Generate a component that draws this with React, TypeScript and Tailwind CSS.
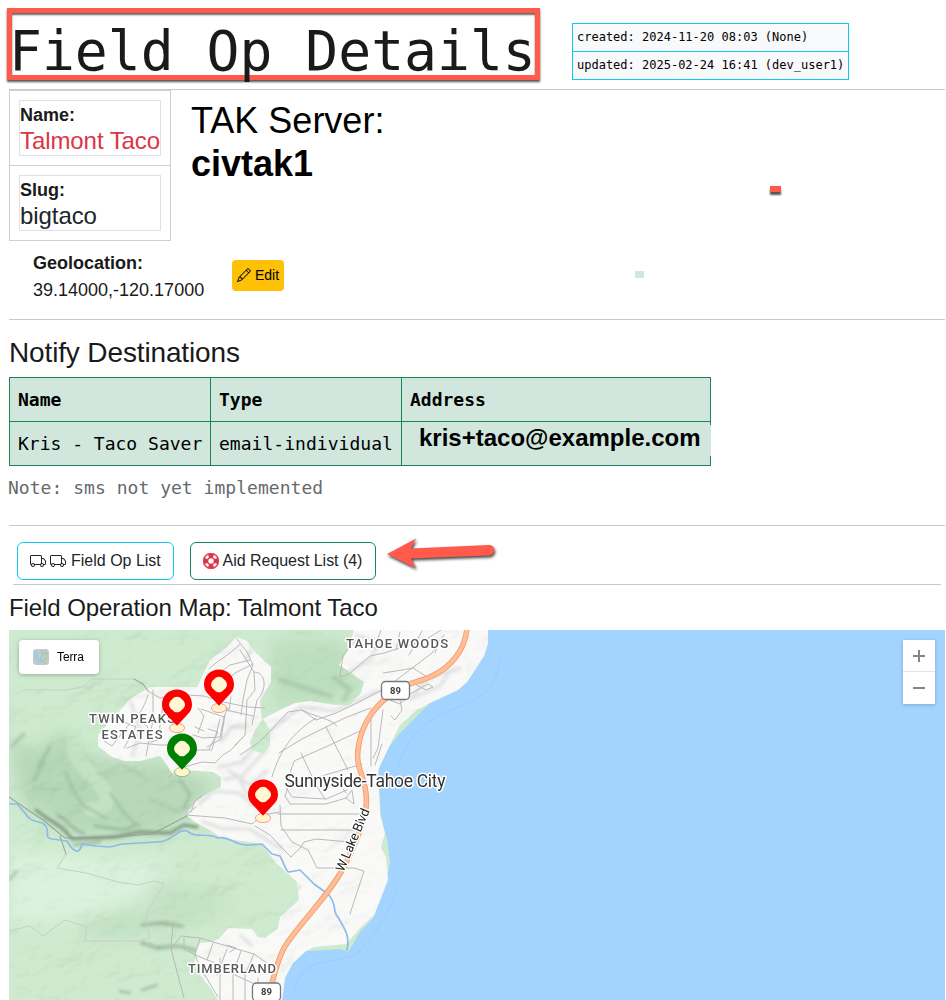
import React from "react";
import { BsLifePreserver, BsPencil, BsTruck } from "react-icons/bs";

const mono = "font-['DejaVu_Sans_Mono',monospace]";

function Header() {
  return (
    <header className="flex h-[89px] items-start pl-[7px] pt-2">
      <h1
        className={`${mono} flex h-[72px] w-[533px] items-center whitespace-pre border-[5px] border-[#ff5a4c] text-[54.7px] leading-[62px] text-[#1a1a1a] shadow-[0_2px_2px_#555,inset_0_2px_2px_#666] pt-[13px]`}
      >
        <span className="-ml-[3px]">Field Op Details</span>
      </h1>
      <div className={`${mono} ml-8 mt-[15px] w-[277px] border border-[#0dcaf0] bg-[#f8f9fa] text-xs text-black`}>
        <div className="h-7 border-b border-[#0dcaf0] pl-1 leading-[26px]">created: 2024-11-20 08:03 (None)</div>
        <div className="h-[27px] pl-1 leading-[26px]">updated: 2025-02-24 16:41 (dev_user1)</div>
      </div>
    </header>
  );
}

function NameCell({ label, value, tone }: { label: string; value: string; tone: string }) {
  return (
    <div className="h-[75px] border-b border-[#cfcfcf] p-[9px]">
      <div className="h-[56px] border border-[#dee2e6]">
        <div className="mt-[1px] text-lg font-bold leading-[27px]">{label}</div>
        <div className={`-mt-[1px] whitespace-nowrap text-2xl leading-[26px] tracking-[-0.08px] ${tone}`}>{value}</div>
      </div>
    </div>
  );
}

function Overview() {
  return (
    <section className="relative ml-[9px] mr-px h-[230px] border-t border-[#c8c8c8]">
      <div className="flex">
        <div className="w-[162px] border border-b-0 border-[#cfcfcf]">
          <NameCell label="Name:" value="Talmont Taco" tone="text-[#dc3545]" />
          <NameCell label="Slug:" value="bigtaco" tone="text-[#212529]" />
        </div>
        <div className="ml-5 mt-[9px] text-4xl leading-[43px] text-black">
          TAK Server:
          <div className="font-bold">civtak1</div>
        </div>
      </div>
      <div className="ml-6 mt-[9px] flex">
        <div className="w-[199px] text-lg leading-[27px]">
          <div className="font-bold">Geolocation:</div>
          <div>39.14000,-120.17000</div>
        </div>
        <button className="mt-[10px] flex h-[31px] w-[52px] items-center gap-1 rounded bg-[#ffc107] pb-px pl-[5px] text-sm text-black">
          <BsPencil size={14} />
          Edit
        </button>
      </div>
      <div className="absolute left-[761px] top-[96px] h-1.5 w-[11px] bg-[#ff5a4c] shadow-[0_3px_2px_#555]" />
      <div className="absolute left-[626px] top-[181px] h-[7px] w-[9px] bg-[#d1e7dd]" />
    </section>
  );
}

function Destinations() {
  return (
    <section className="ml-[9px] mr-px h-[206px] border-t border-[#c8c8c8] pt-[16px]">
      <h2 className="text-[28px] leading-[34px] tracking-[-0.14px]">Notify Destinations</h2>
      <table className={`${mono} mt-[7px] w-[702px] table-fixed border-collapse bg-[#d1e7dd] text-left text-lg text-black`}>
        <colgroup>
          <col className="w-[201px]" />
          <col className="w-[191px]" />
          <col />
        </colgroup>
        <thead>
          <tr className="h-11">
            <th className="border border-[#198754] p-0 pl-2">Name</th>
            <th className="border border-[#198754] p-0 pl-2">Type</th>
            <th className="border border-[#198754] p-0 pl-2">Address</th>
          </tr>
        </thead>
        <tbody>
          <tr className="h-11">
            <td className="whitespace-nowrap border border-[#198754] p-0 pl-2">Kris - Taco Saver</td>
            <td className="whitespace-nowrap border border-[#198754] p-0 pl-2 tracking-[0.03px]">email-individual</td>
            <td className="relative border border-[#198754] p-0">
              <div className="absolute left-[17px] right-[-1px] top-[3px] h-[31px] bg-[#d1e7dd] font-['Liberation_Sans',sans-serif] text-2xl font-bold leading-[26px]">
                kris+taco@example.com
              </div>
            </td>
          </tr>
        </tbody>
      </table>
      <p className={`${mono} -ml-px mt-[8px] text-lg leading-[27px] tracking-[0.03px] text-[#666a6c]`}>
        Note: sms not yet implemented
      </p>
    </section>
  );
}

function Actions() {
  return (
    <nav className="relative ml-[9px] mr-px h-[59px] border-t border-[#c8c8c8] pt-4">
      <div className="ml-2 flex gap-4 text-base text-[#212529]">
        <button className="flex h-[38px] w-[157px] items-center rounded-md border border-[#0dcaf0] pl-[11.5px]">
          <BsTruck size={16} className="-mt-px" />
          <BsTruck size={16} className="-mt-px ml-[4.5px] mr-[5px]" />
          <span className="whitespace-nowrap">Field Op List</span>
        </button>
        <button className="flex h-[38px] w-[186px] items-center rounded-md border border-[#198754] pl-3">
          <BsLifePreserver size={16} color="#dc3545" stroke="#dc3545" strokeWidth={0.5} className="-mt-px mr-[3.5px]" />
          <span className="whitespace-nowrap tracking-[-0.03px]">Aid Request List (4)</span>
        </button>
      </div>
      <svg className="absolute left-[371px] top-[8px] h-[44px] w-[122px]" viewBox="380 534 122 44">
        <path
          d="M387 554L416 538.5L411 548.5L489 545C496 545 496 555 489 555.5L411 558.5L416 568Z"
          fill="#ff5a4c"
          style={{ filter: "drop-shadow(1px 2px 1.5px #444)" }}
        />
      </svg>
    </nav>
  );
}

const land =
  "M9 630H488V643L484 656L467 682L458 690L430 703L415 718L400 733L388 748L380 765L378 775L380 800L381 815L385 833L387 838L390 862L387 880L379 903L374 917L360 932L353 944L348 952L340 949L325 950L306 951L293 963L285 975L282 1000H9Z";
const urban =
  "M354 630L348 650L339 665L350 672L364 682L361 693L350 705L335 705L310 701L295 703L278 711L263 719L270 730V745L263 754L252 750L250 742L255 730L262 720L260 700L271 682V667L255 652L247 641L236 637L226 648L210 660L197 687H150L130 699L98 735V746L112 757L125 761H140L160 756L167 765L173 775L185 770L213 772L221 777V787L205 795L195 802L186 815L195 822L210 830L220 837L235 840L262 844L275 862L297 882L299 900L280 917L278 928L265 938L258 937L252 929L228 928L220 938L210 942L200 943L196 950L194 965L200 975L212 990L218 1000H282L285 978L293 963L306 951L314 947L346 944L362 926L374 915L379 903L388 880L386 857L381 848L385 833L380 815L378 770L390 745L400 725L417 710L430 703L458 690L467 682L484 656L488 643V630Z";

const minorRoads = [
  "M236 638L247 652L253 665L247 680L243 700L241 715",
  "M240 644C230 655 215 662 209 669",
  "M250 660L230 665L214 677M253 664L235 673L220 687",
  "M254 672C268 672 266 692 257 700L252 725",
  "M240 650L254 672L255 690L247 700L245 735L235 745",
  "M148 695C142 715 133 720 126 728L112 746L104 741",
  "M124 722L136 727L124 748M136 718L147 726L153 740",
  "M153 690V720L146 756M164 697L158 740L151 742",
  "M127 748L140 743L160 745L177 745M148 691L160 698L188 695L204 696L223 702L248 707L265 708",
  "M201 709L224 717L220 737L203 738L193 735",
  "M198 708L204 716L198 733M224 717L228 708M220 719L212 750L195 750",
  "M225 715L221 739L207 747M208 729L218 732L209 749M204 731L195 727",
  "M245 735L231 750L223 755L215 763L202 762L181 768L168 777",
  "M226 710L253 716M231 697L229 711",
  "M356 640L343 655L340 677L349 674L370 656L384 653L425 640L441 630",
  "M381 630L374 649M400 632L396 650M422 631L409 655M440 640L435 653",
  "M383 673L402 670L413 668L427 677M444 635L432 653L403 675L386 688",
  "M411 682L426 690L433 687L428 684L410 694L400 704L390 700",
  "M240 755L258 743L272 729L288 712L302 710L316 720L336 713L355 704L382 690",
  "M302 710C318 718 330 718 337 726M316 718C292 733 280 750 272 777",
  "M279 753L302 739L326 727L347 717L371 708M301 753L316 785M326 727L348 770",
  "M294 761L330 745L362 730M312 779L362 764M294 762C286 780 290 784 285 796L290 804L326 804L346 798L354 804L352 790L346 798",
  "M287 789L292 797L326 799L347 790M316 785L325 799M338 782L346 793",
  "M371 710V766M383 710L378 748L373 758M400 700L402 710L395 720L391 716M382 744L375 765",
  "M278 814H362M281 830H354M280 805L281 826L292 842L308 850L317 868H354L364 871L350 914",
  "M255 826L270 835L284 850L291 857L301 847L304 842L316 839L350 842",
  "M186 815L196 807M186 815L225 818L252 824L262 815L280 812M191 812L195 801L202 796",
  "M173 923L171 949L184 998M171 949L181 936L200 938L230 947L254 954L270 965M184 938V949L200 957L215 963L235 975L270 991",
  "M200 939L195 955L201 969L218 997M213 943L207 960M227 949L217 975M241 951L234 971M254 954L245 975",
  "M220 958V1000M233 964V1000M245 970V1000M258 978V1000M227 945L236 948L230 952",
];

const highway =
  "M467 628C465 652 449 668 432 676C416 684 403 682 389 696C370 710 360 730 358 750C355 770 369 781 366 808C365 822 351 853 345 865C330 895 296 927 284 948C276 963 273 980 268 1000";

function Shield({ x, y }: { x: number; y: number }) {
  return (
    <g>
      <rect x={x} y={y} width="28" height="18" rx="4" fill="#fff" stroke="#74777c" strokeWidth="1.3" />
      <text x={x + 14} y={y + 12} textAnchor="middle" fontSize="9.5" fontWeight="700" fill="#3d3d3d">
        89
      </text>
    </g>
  );
}

function Pin({ x, y, color }: { x: number; y: number; color: string }) {
  return (
    <g transform={`translate(${x} ${y})`}>
      <ellipse cx="0" cy="3" rx="7.6" ry="4.6" fill="#fff5cc" stroke={color} strokeOpacity=".6" strokeWidth=".6" />
      <path
        d="M0 .8L-10.5 -10.5C-13.5 -13.5 -15 -16.5 -15 -20.5C-15 -29 -8.5 -35.5 0 -35.5C8.5 -35.5 15 -29 15 -20.5C15 -16.5 13.5 -13.5 10.5 -10.5Z"
        fill={color}
      />
      <path
        d="M-3 -27.5Q0 -29.2 3 -27.5L6.5 -24.3Q9.5 -20.5 6.5 -16.8L3 -13.5Q0 -11.8 -3 -13.5L-6.5 -16.8Q-9.5 -20.5 -6.5 -24.3Z"
        fill="#fff8d2"
      />
    </g>
  );
}

function MapDrawing() {
  return (
    <svg className="block h-[370px] w-[936px] font-[Roboto,sans-serif]" viewBox="9 630 936 370">
      <defs>
        <clipPath id="land">
          <path d={land} />
        </clipPath>
        <clipPath id="urban">
          <path d={urban} />
        </clipPath>
        <filter id="blur-fine" x="-30%" y="-30%" width="160%" height="160%">
          <feGaussianBlur stdDeviation="1.7" />
        </filter>
        <filter id="blur-wide" x="-40%" y="-40%" width="180%" height="180%">
          <feGaussianBlur stdDeviation="8" />
        </filter>
        <filter id="relief" x="0" y="0" width="100%" height="100%">
          <feTurbulence type="fractalNoise" baseFrequency=".018 .026" numOctaves="4" seed="8" result="n" />
          <feDiffuseLighting in="n" surfaceScale="9" diffuseConstant="1.15" lightingColor="#fff">
            <feDistantLight azimuth="225" elevation="60" />
          </feDiffuseLighting>
        </filter>
      </defs>
      <rect x="9" y="630" width="936" height="370" fill="#a3d3ff" />
      <path
        d="M499 660C497 690 480 700 450 710C425 720 405 740 399 765M398 885C389 915 375 935 358 953C335 965 300 956 295 990"
        fill="none"
        stroke="#9accfa"
        strokeWidth="1"
      />
      <path d={land} fill="#c6e7c7" />
      <g clipPath="url(#land)">
        <g filter="url(#blur-wide)">
          <path d="M9 740L40 750L60 730L100 765L160 762L215 785L190 815L160 835L75 835L20 800Z" fill="#abd2ad" />
          <path d="M100 790L130 765L215 780L175 815Z" fill="#aed2af" />
          <path d="M9 850L70 855L170 860L155 890L80 918L9 925Z" fill="#d6f0d7" />
          <path d="M150 880L180 885L240 905L180 930L145 935Z" fill="#bbdebc" />
          <path d="M270 640L345 640L362 695L275 710Z" fill="#b3d9b5" />
          <path d="M80 925L150 905L135 940L90 940Z" fill="#b9ddba" />
        </g>
        <g filter="url(#blur-fine)" fill="none" strokeLinecap="round" strokeLinejoin="round">
          <path d="M75 738C68 760 92 772 104 790C113 804 100 812 90 809" stroke="#bfe1bf" strokeWidth="14" opacity=".75" />
          <path d="M110 793C120 808 130 822 140 826M66 773C70 785 76 796 84 806L106 818" stroke="#87ac8b" strokeWidth="3" opacity=".6" />
          <path d="M36 810C50 822 60 823 72 839L115 837L140 832L170 833L184 825L197 827" stroke="#5f7963" strokeWidth="3.5" opacity=".8" />
          <path d="M58 815C70 822 74 832 84 833M74 845L100 842M95 826L125 830L135 825" stroke="#759a7a" strokeWidth="3" opacity=".6" />
          <path d="M12 746L24 734M34 780L44 762M50 747L38 767M180 780L190 795L184 808" stroke="#7da384" strokeWidth="3.5" opacity=".5" />
          <path d="M100 775L120 764L143 776M150 800L180 812" stroke="#91b895" strokeWidth="4" opacity=".4" />
          <path d="M142 925L160 923L182 926M142 943L158 948L178 946L198 951" stroke="#759379" strokeWidth="4" opacity=".55" />
          <path d="M120 991L130 993M142 990L157 985M9 880L16 872" stroke="#78937b" strokeWidth="2.5" opacity=".6" />
          <path d="M335 678L350 690L344 699M280 680L330 696" stroke="#82a888" strokeWidth="5" opacity=".4" />
        </g>
      </g>
      <path d={urban} fill="#f8f8f7" />
      <g clipPath="url(#urban)">
        <g filter="url(#blur-fine)" fill="none" stroke="#c9cbcb" strokeWidth="3" opacity=".6">
          <path d="M218 768L241 762L265 735L300 707L334 711L380 690M224 780L239 777L246 793L260 796M198 804L214 791L239 793L261 810M202 821L223 829L249 829L282 849M279 690L265 712M410 700L428 678L461 668M413 698L440 686L450 671M220 742L232 727L248 727M238 780L268 748M228 770L250 785L268 770" />
          <path d="M130 700L140 730L132 757M258 636L246 660M300 885L280 910M240 935L252 946M355 635L380 642L370 660L344 675" />
        </g>
      </g>
      <g clipPath="url(#land)">
        <rect x="9" y="630" width="480" height="370" filter="url(#relief)" className="opacity-[0.14] mix-blend-multiply" />
      </g>
      <g clipPath="url(#land)" fill="none" strokeLinecap="round" strokeLinejoin="round">
        <path
          d="M23 690L65 690L83 687L92 679L134 679M66 854L57 868L86 873L118 882L138 885L155 881L164 884L149 908L146 920L150 938L138 941L85 941L87 927L65 920L50 931L43 936L30 926L9 931"
          stroke="#c6cfc6"
          strokeWidth="1"
        />
        <path d="M134 679L143 684L148 691M9 797L28 810L43 820L65 838L115 837L152 834L187 816M60 836L66 854" stroke="#8e9891" strokeWidth="1.1" opacity=".8" />
        <path d={minorRoads.join("")} stroke="#b8b9b9" strokeWidth="1" />
        <path
          d="M9 804L17 804L25 813C32 825 40 819 46 826C50 836 44 837 52 839L67 841C75 855 80 853 82 844L96 846L110 847L122 844L157 842C173 842 177 828 187 831C196 839 209 832 218 838C228 835 235 846 249 845L262 844L272 854L280 856C285 865 286 872 289 872L300 870L314 884L328 894C338 905 332 912 338 917C345 930 350 935 347 950"
          stroke="#8bbbea"
          strokeWidth="1.7"
        />
        <path d={highway} stroke="#f29b68" strokeWidth="5.5" />
        <path d={highway} stroke="#ffbe97" strokeWidth="3.8" />
      </g>
      <Shield x={381.5} y={681.5} />
      <Shield x={252.5} y={983} />
      <g fill="#57595b" stroke="#fff" strokeWidth="3" strokeLinejoin="round" paintOrder="stroke" fontSize="13" fontWeight="500" textAnchor="middle">
        <text x="397" y="648" textLength="102">TAHOE WOODS</text>
        <text x="132" y="723" textLength="86">TWIN PEAKS</text>
        <text x="132" y="739" textLength="61">ESTATES</text>
        <text x="232" y="973" textLength="88">TIMBERLAND</text>
        <text x="365" y="786.5" textLength="161" fontSize="17.5" fontWeight="400" fill="#333">Sunnyside-Tahoe City</text>
        <text transform="translate(353 840) rotate(-67)" y="4" textLength="67" fontSize="13" fontWeight="400" fill="#222">W Lake Blvd</text>
      </g>
      <Pin x={177} y={725} color="red" />
      <Pin x={219} y={705} color="red" />
      <Pin x={182} y={769} color="green" />
      <Pin x={263} y={815} color="red" />
    </svg>
  );
}

function FieldMap() {
  return (
    <section className="relative ml-[9px] mr-px h-[370px] overflow-hidden">
      <MapDrawing />
      <button className="absolute left-2.5 top-2.5 flex h-[34px] w-20 items-center gap-2 rounded bg-white pl-3.5 text-xs text-black shadow-[0_1px_4px_#0004]">
        <svg className="h-4 w-4 rounded-sm" viewBox="0 0 16 16">
          <path d="M0 0H16V16H0Z" fill="#bdcec3" />
          <path d="M1 3L6 2L4 7L10 13L6 14L1 8Z" fill="#9dcdec" />
          <path d="M8 1L10 6L7 10L14 15M10 4H15M12 1L14 9L10 11" fill="none" stroke="#a9b8ad" strokeWidth=".7" />
          <path d="M.5 .5H15.5V15.5H.5Z" fill="none" stroke="#c9c9c9" />
        </svg>
        <span className="tracking-[-0.1px]">Terra</span>
      </button>
      <div className="absolute right-2.5 top-2.5 h-16 w-8 bg-white shadow-[0_1px_4px_#0003]">
        <svg className="h-16 w-8" viewBox="0 0 32 64">
          <path d="M10 16H22M16 10V22M10 48H22" stroke="#80868b" strokeWidth="2" />
          <path d="M0 31.5H32" stroke="#e5e5e5" />
        </svg>
      </div>
    </section>
  );
}

export default function App() {
  return (
    <main className="h-[1000px] w-[946px] overflow-hidden bg-white font-['Liberation_Sans',Arial,sans-serif] text-[#1a1a1a]">
      <Header />
      <Overview />
      <Destinations />
      <Actions />
      <div className="ml-[13px] w-[928px] border-t border-[#c8c8c8]" />
      <h2 className="ml-[9px] h-[45px] pt-[8px] text-2xl leading-[29px] tracking-[-0.08px]">Field Operation Map: Talmont Taco</h2>
      <FieldMap />
    </main>
  );
}
